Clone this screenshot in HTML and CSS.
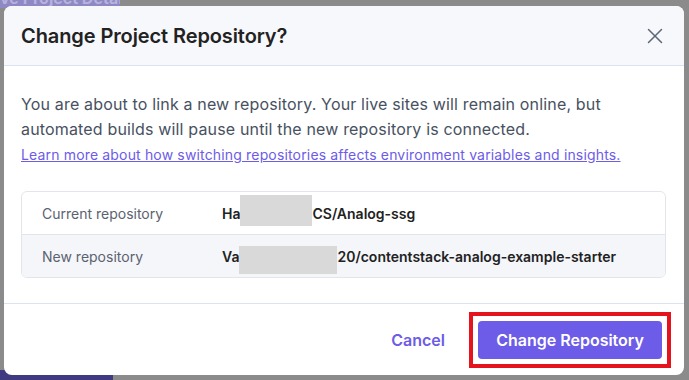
FILE: index.html
```html
<!DOCTYPE html>
<html lang="en">
<head>
  <meta charset="UTF-8">
  <meta name="viewport" content="width=device-width, initial-scale=1.0">
  <title>Change Project Repository</title>
  <link rel="stylesheet" href="styles.css">
</head>
<body>

  <!-- page behind the overlay -->
  <div class="bg-tab">ve Project Details</div>
  <div class="bg-bar"></div>

  <div class="modal">
    <div class="modal-header">
      <h2 class="modal-title">Change Project Repository?</h2>
      <button class="close-btn" aria-label="Close">
        <svg width="16" height="16" viewBox="0 0 16 16" fill="none">
          <path d="M1.5 1.5 L14.5 14.5 M14.5 1.5 L1.5 14.5" stroke="#5d6675" stroke-width="1.5" stroke-linecap="round"/>
        </svg>
      </button>
    </div>

    <div class="modal-body">
      <p class="intro">You are about to link a new repository. Your live sites will remain online, but automated builds will pause until the new repository is connected.</p>
      <a class="learn-link" href="#">Learn more about how switching repositories affects environment variables and insights.</a>

      <div class="repo-table">
        <div class="repo-row">
          <span class="repo-label">Current repository</span>
          <span class="repo-value">Ha<span class="redact redact-1"></span>CS/Analog-ssg</span>
        </div>
        <div class="repo-row alt">
          <span class="repo-label">New repository</span>
          <span class="repo-value">Va<span class="redact redact-2"></span>20/contentstack-analog-example-starter</span>
        </div>
      </div>
    </div>

    <div class="modal-footer">
      <button class="cancel-btn">Cancel</button>
      <div class="highlight">
        <button class="primary-btn">Change Repository</button>
      </div>
    </div>
  </div>

</body>
</html>
```

FILE: styles.css
```css
html, body {
  height: 100%;
}

body {
  margin: 0;
  padding: 6px 5px 5px 4px;
  box-sizing: border-box;
  background: #8b8b8b;
  font-family: Inter, "Noto Sans", sans-serif;
  overflow: hidden;
  position: relative;
}

.bg-tab {
  position: absolute;
  left: 0;
  top: -12px;
  width: 120px;
  height: 20px;
  background: #8e88c4;
  color: #b7b2dc;
  font-size: 16px;
  font-weight: 700;
  line-height: 20px;
  white-space: nowrap;
  overflow: hidden;
  border-radius: 0 0 4px 0;
}

.bg-bar {
  position: absolute;
  left: 0;
  bottom: 0;
  width: 113px;
  height: 10px;
  background: #403a80;
}

.modal {
  position: relative;
  height: 100%;
  background: #fff;
  border-radius: 8px;
  display: flex;
  flex-direction: column;
  overflow: hidden;
}

.modal-header {
  height: 60px;
  box-sizing: border-box;
  display: flex;
  align-items: center;
  justify-content: space-between;
  padding: 0 21px 0 17px;
  background: #f7f8fc;
  border-bottom: 1px solid #dde3ee;
}

.modal-title {
  margin: 0;
  font-size: 20px;
  font-weight: 600;
  color: #222;
  letter-spacing: -0.1px;
}

.close-btn {
  background: none;
  border: none;
  padding: 0;
  width: 16px;
  height: 16px;
  cursor: pointer;
  display: flex;
}

.modal-body {
  padding: 26px 18px 25px 17px;
  border-bottom: 1px solid #dde3ee;
}

.intro {
  margin: 0;
  font-size: 16px;
  line-height: 25px;
  letter-spacing: 0.16px;
  color: #475161;
}

.learn-link {
  display: block;
  font-size: 14px;
  line-height: 20px;
  letter-spacing: 0.16px;
  margin-top: 3px;
  color: #6c5ce7;
}

.repo-table {
  margin-top: 26px;
  border: 1px solid #e3e5ea;
  border-radius: 6px;
  overflow: hidden;
}

.repo-row {
  display: flex;
  align-items: center;
  height: 42px;
  padding-left: 20px;
  font-size: 14px;
}

.repo-row.alt {
  background: #f5f6fa;
  border-top: 1px solid #e3e5ea;
}

.repo-label {
  width: 180px;
  color: #5b6270;
}

.repo-value {
  font-weight: 600;
  color: #222;
  display: flex;
  align-items: center;
}

.redact {
  display: inline-block;
  background: #d9d9d9;
}

.redact-1 {
  width: 72px;
  height: 31px;
  margin-top: -5px;
}

.redact-2 {
  width: 98px;
  height: 28px;
  margin-top: 7px;
}

.modal-footer {
  flex: 1;
  display: flex;
  align-items: center;
  justify-content: flex-end;
  gap: 24px;
  padding: 0 13px 0 0;
}

.cancel-btn {
  background: none;
  border: none;
  padding: 0;
  font-family: inherit;
  font-size: 16px;
  font-weight: 600;
  color: #6c5ce7;
  cursor: pointer;
}

.highlight {
  display: flex;
  padding: 5px;
  border: 4px solid #e5131d;
}

.primary-btn {
  width: 184px;
  height: 38px;
  background: #6c5ce7;
  color: #fff;
  border: none;
  border-radius: 4px;
  font-family: inherit;
  font-size: 16px;
  font-weight: 600;
  cursor: pointer;
}
```
